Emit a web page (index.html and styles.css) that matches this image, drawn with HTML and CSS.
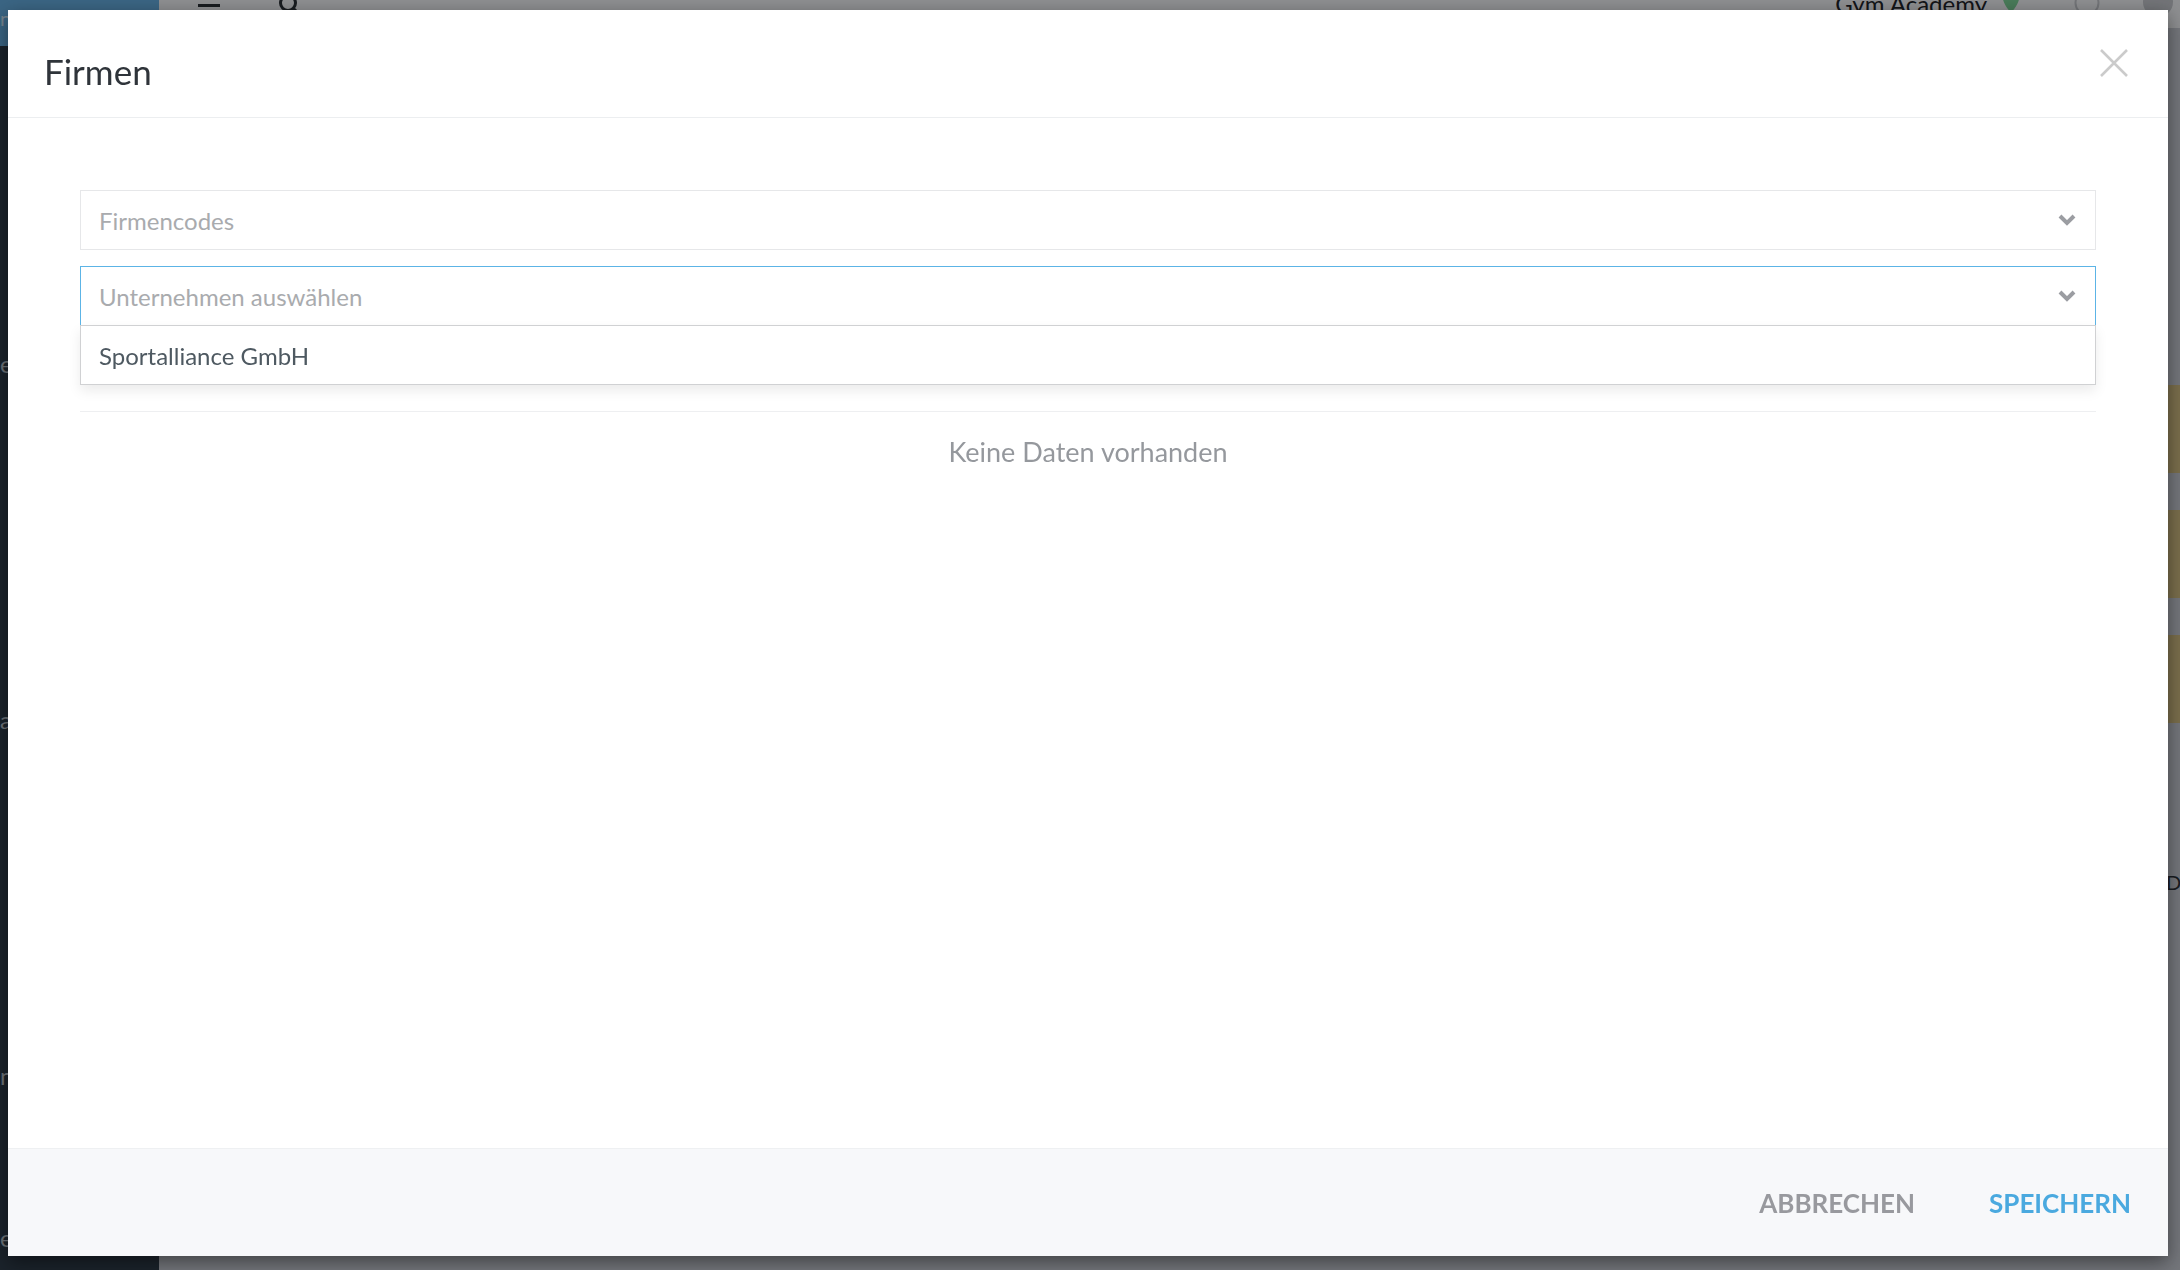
FILE: index.html
```html
<!DOCTYPE html>
<html lang="de">
<head>
    <meta charset="UTF-8">
    <meta name="viewport" content="width=device-width, initial-scale=1.0">
    <title>Firmen</title>
    <link rel="stylesheet" href="styles.css">
</head>
<body>
    <div class="app">
        <aside class="sidebar">
            <div class="logo">
                <div class="logo-word">LINE</div>
                <div class="logo-sub">n</div>
            </div>
            <nav class="side-nav">
                <div class="side-item">e</div>
                <div class="side-item">a</div>
                <div class="side-item">n</div>
                <div class="side-item side-last">elt</div>
            </nav>
        </aside>
        <div class="main">
            <header class="topbar">
                <span class="burger"><i></i><i></i><i></i></span>
                <svg class="search-icon" width="24" height="24" viewBox="0 0 24 24">
                    <circle cx="10" cy="10" r="7.5" fill="none" stroke="#2b3138" stroke-width="3"/>
                    <path d="M15.5 15.5 L22 22" stroke="#2b3138" stroke-width="3" stroke-linecap="round"/>
                </svg>
                <div class="spacer"></div>
                <span class="studio">Gym Academy</span>
                <svg class="pin" width="16" height="22" viewBox="0 0 16 22">
                    <path d="M8 0 C3.6 0 0 3.4 0 7.6 C0 13 8 22 8 22 C8 22 16 13 16 7.6 C16 3.4 12.4 0 8 0 Z" fill="#7fd69b"/>
                </svg>
                <svg class="help" width="26" height="26" viewBox="0 0 26 26">
                    <circle cx="13" cy="13" r="11.5" fill="none" stroke="#c9ccd2" stroke-width="2"/>
                </svg>
                <svg class="user" width="30" height="30" viewBox="0 0 30 30">
                    <circle cx="15" cy="15" r="15" fill="#c9ccd2"/>
                </svg>
            </header>
            <div class="content">
                <div class="tile"></div>
                <div class="tile"></div>
                <div class="tile"></div>
                <div class="row-label">D</div>
            </div>
        </div>
    </div>

    <div class="backdrop"></div>

    <div class="modal">
        <div class="modal-header">
            <h2 class="modal-title">Firmen</h2>
            <button class="close-btn" aria-label="Schließen">
                <svg width="28" height="28" viewBox="0 0 28 28">
                    <path d="M1 1 L27 27 M27 1 L1 27" stroke="#cbcbcb" stroke-width="2.6"/>
                </svg>
            </button>
        </div>

        <div class="modal-body">
            <div class="select">
                <span class="placeholder">Firmencodes</span>
                <svg class="chevron" width="18" height="12" viewBox="0 0 18 12">
                    <path d="M2 2 L9 9 L16 2" fill="none" stroke="#9b9da2" stroke-width="4"/>
                </svg>
            </div>

            <div class="select-wrap">
                <div class="select open">
                    <span class="placeholder">Unternehmen auswählen</span>
                    <svg class="chevron" width="18" height="12" viewBox="0 0 18 12">
                        <path d="M2 2 L9 9 L16 2" fill="none" stroke="#9b9da2" stroke-width="4"/>
                    </svg>
                </div>
                <div class="dropdown">
                    <div class="dropdown-item">Sportalliance GmbH</div>
                </div>
            </div>

            <div class="empty">Keine Daten vorhanden</div>
        </div>

        <div class="modal-footer">
            <button class="btn btn-cancel">ABBRECHEN</button>
            <button class="btn btn-save">SPEICHERN</button>
        </div>
    </div>
</body>
</html>
```

FILE: styles.css
```css
html, body {
    margin: 0;
    padding: 0;
    height: 100%;
    overflow: hidden;
}
body {
    font-family: Lato, "Open Sans", Arial, sans-serif;
    background-color: #cbcfd8;
}

/* app behind the dialog */
.app {
    display: flex;
    height: 1320px;
    margin-top: -32px;
}
.sidebar {
    width: 159px;
    background: #2f3d4b;
    display: flex;
    flex-direction: column;
}
.logo {
    height: 78px;
    background: #67b1e6;
    color: #cfe6f7;
}
.logo-word {
    padding: 0 0 0 2px;
    font-size: 34px;
    letter-spacing: 14px;
    font-weight: 300;
    line-height: 38px;
}
.logo-sub {
    font-size: 20px;
    line-height: 24px;
}
.side-nav {
    flex: 1;
    display: flex;
    flex-direction: column;
    color: #bfc8d1;
    font-size: 24px;
    line-height: 28px;
}
.side-item {
    margin-top: 328px;
}
.side-item:first-child {
    margin-top: 304px;
}
.side-last {
    margin-top: auto;
    padding-bottom: 36px;
}
.main {
    flex: 1;
    display: flex;
    flex-direction: column;
}
.topbar {
    height: 60px;
    background: #f8fafd;
    display: flex;
    align-items: center;
    padding: 0 7px 0 39px;
}
.burger {
    display: flex;
    flex-direction: column;
    gap: 4px;
    width: 22px;
    margin-top: 14px;
}
.burger i {
    display: block;
    height: 3px;
    background: #2b3138;
}
.search-icon {
    margin: 14px 0 0 58px;
}
.spacer {
    flex: 1;
}
.studio {
    font-size: 24px;
    color: #1f252b;
    margin-top: 10px;
}
.pin {
    margin: 8px 0 0 16px;
}
.help {
    margin: 10px 0 0 55px;
}
.user {
    margin: 8px 0 0 43px;
}
.content {
    flex: 1;
    display: flex;
    flex-direction: column;
    align-items: flex-end;
    gap: 37px;
    padding-top: 357px;
    background: #cbcfd8;
}
.tile {
    width: 300px;
    height: 88px;
    background: #d6c185;
}
.row-label {
    width: 14px;
    margin-top: 110px;
    font-size: 20px;
    color: #2b3138;
}

.backdrop {
    position: fixed;
    inset: 0;
    background: rgba(0, 0, 0, 0.43);
}

/* dialog */
.modal {
    position: fixed;
    left: 8px;
    top: 10px;
    width: 2160px;
    height: 1246px;
    background: #fff;
    display: flex;
    flex-direction: column;
    box-shadow: 0 6px 18px rgba(0, 0, 0, 0.45);
}
.modal-header {
    display: flex;
    justify-content: space-between;
    align-items: flex-start;
    padding: 40px 36px 24px;
    border-bottom: 1px solid #eceef0;
}
.modal-title {
    margin: 0;
    font-size: 35px;
    line-height: 43px;
    font-weight: 400;
    color: #2f343a;
}
.close-btn {
    border: none;
    background: none;
    padding: 0;
    margin: -1px 4px 0 0;
    width: 28px;
    height: 28px;
    cursor: pointer;
}
.close-btn svg {
    display: block;
}
.modal-body {
    flex: 1;
    padding: 72px 72px 0;
}
.select {
    height: 60px;
    box-sizing: border-box;
    border: 1px solid #e6e7e9;
    display: flex;
    align-items: center;
    justify-content: space-between;
    padding: 0 19px 0 18px;
    font-size: 24px;
    background: #fff;
}
.placeholder {
    color: #a9abae;
}
.chevron {
    display: block;
}
.select-wrap {
    position: relative;
    margin-top: 16px;
}
.select.open {
    border-color: #5cb4e6;
    border-bottom-color: #d0d1d3;
}
.dropdown {
    position: absolute;
    left: 0;
    right: 0;
    top: 59px;
    height: 60px;
    box-sizing: border-box;
    border: 1px solid #d0d1d3;
    background: #fff;
    box-shadow: 0 6px 12px rgba(0, 0, 0, 0.08);
    display: flex;
    align-items: center;
    padding-left: 18px;
    z-index: 2;
}
.dropdown-item {
    font-size: 24px;
    color: #4e5961;
}
.empty {
    margin-top: 85px;
    border-top: 1px solid #eeeff1;
    padding-top: 23px;
    text-align: center;
    font-size: 27px;
    color: #95989d;
}
.modal-footer {
    height: 108px;
    box-sizing: border-box;
    background: #f7f8fa;
    border-top: 1px solid #eef0f2;
    display: flex;
    justify-content: flex-end;
    align-items: center;
}
.btn {
    border: none;
    background: none;
    font-family: inherit;
    font-size: 26px;
    font-weight: 700;
    padding: 18px 37px;
    cursor: pointer;
}
.btn-cancel {
    color: #98999e;
}
.btn-save {
    color: #4aa9df;
}
```
